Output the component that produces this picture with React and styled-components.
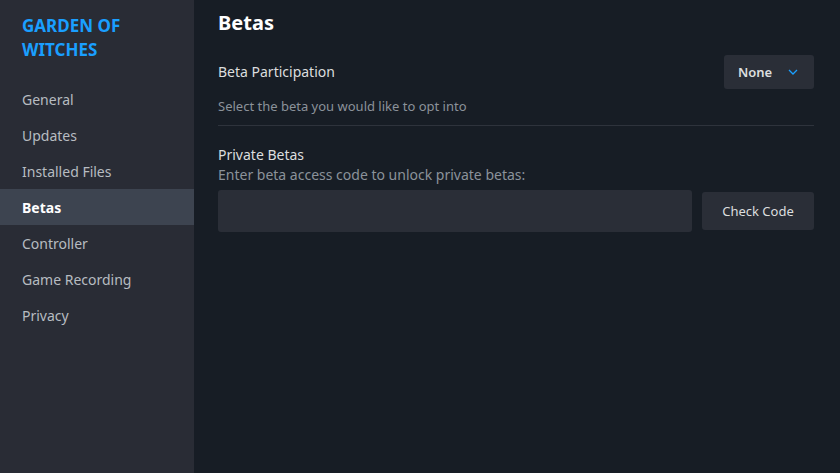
import React from "react";
import styled, { createGlobalStyle } from "styled-components";

const Global = createGlobalStyle`
  html, body { margin: 0; padding: 0; background: #171d25; }
  body { font-family: "Noto Sans", "Open Sans", sans-serif; }
  * { box-sizing: border-box; }
`;

const Page = styled.div`
  display: flex;
  width: 840px;
  height: 473px;
  background: #171d25;
  overflow: hidden;
`;

const Sidebar = styled.nav`
  width: 194px;
  flex-shrink: 0;
  background: #292c35;
  display: flex;
  flex-direction: column;
  padding-top: 14px;
`;

const GameTitle = styled.div`
  color: #1a9fff;
  font-weight: 700;
  font-size: 17px;
  line-height: 24px;
  padding: 0 22px;
  text-transform: uppercase;
  margin-bottom: 19px;
`;

const NavItem = styled.div`
  height: 36px;
  display: flex;
  align-items: center;
  padding: 0 22px;
  font-size: 14px;
  color: ${(p) => (p.$active ? "#ffffff" : "#b7bcc1")};
  font-weight: ${(p) => (p.$active ? 700 : 400)};
  background: ${(p) => (p.$active ? "#3d4450" : "transparent")};
`;

const Main = styled.main`
  flex: 1;
  padding: 8px 26px 0 24px;
  display: flex;
  flex-direction: column;
`;

const Title = styled.h1`
  margin: 0;
  color: #ffffff;
  font-size: 20px;
  font-weight: 700;
  line-height: 30px;
`;

const Section = styled.section`
  display: flex;
  flex-direction: column;
  border-bottom: ${(p) => (p.$divider ? "1px solid #2e333c" : "none")};
  padding-bottom: ${(p) => (p.$divider ? "9px" : "0")};
`;

const Row = styled.div`
  display: flex;
  align-items: center;
  justify-content: space-between;
`;

const Label = styled.div`
  color: #dcdedf;
  font-size: 14px;
  line-height: 20px;
`;

const Desc = styled.div`
  color: #8b929a;
  font-size: ${(p) => p.$size || "13px"};
  line-height: 20px;
`;

const Dropdown = styled.button`
  width: 90px;
  height: 34px;
  border: none;
  border-radius: 3px;
  background: #2a2e37;
  color: #dcdedf;
  font-family: inherit;
  font-size: 13px;
  font-weight: 600;
  display: flex;
  align-items: center;
  padding: 0 0 0 14px;
  gap: 16px;
`;

const InputRow = styled.div`
  display: flex;
  align-items: center;
  gap: 10px;
  margin-top: 5px;
`;

const CodeInput = styled.input`
  flex: 1;
  height: 42px;
  border: none;
  border-radius: 3px;
  background: #2a2e37;
  outline: none;
`;

const Button = styled.button`
  width: 112px;
  height: 38px;
  border: none;
  border-radius: 3px;
  background: #2a2e37;
  color: #dcdedf;
  font-family: inherit;
  font-size: 13px;
`;

const items = ["General", "Updates", "Installed Files", "Betas", "Controller", "Game Recording", "Privacy"];

export default function App() {
  return (
    <>
      <Global />
      <Page>
        <Sidebar>
          <GameTitle>Garden of<br />Witches</GameTitle>
          {items.map((i) => (
            <NavItem key={i} $active={i === "Betas"}>{i}</NavItem>
          ))}
        </Sidebar>
        <Main>
          <Title>Betas</Title>
          <Section $divider style={{ marginTop: 17 }}>
            <Row>
              <Label>Beta Participation</Label>
              <Dropdown>
                None
                <svg width="10" height="6" viewBox="0 0 10 6">
                  <path d="M1 1l4 4 4-4" stroke="#1a9fff" strokeWidth="1.3" fill="none" />
                </svg>
              </Dropdown>
            </Row>
            <Desc style={{ marginTop: 7 }}>Select the beta you would like to opt into</Desc>
          </Section>
          <Section style={{ marginTop: 19 }}>
            <Label>Private Betas</Label>
            <Desc $size="14px">Enter beta access code to unlock private betas:</Desc>
            <InputRow>
              <CodeInput />
              <Button>Check Code</Button>
            </InputRow>
          </Section>
        </Main>
      </Page>
    </>
  );
}
